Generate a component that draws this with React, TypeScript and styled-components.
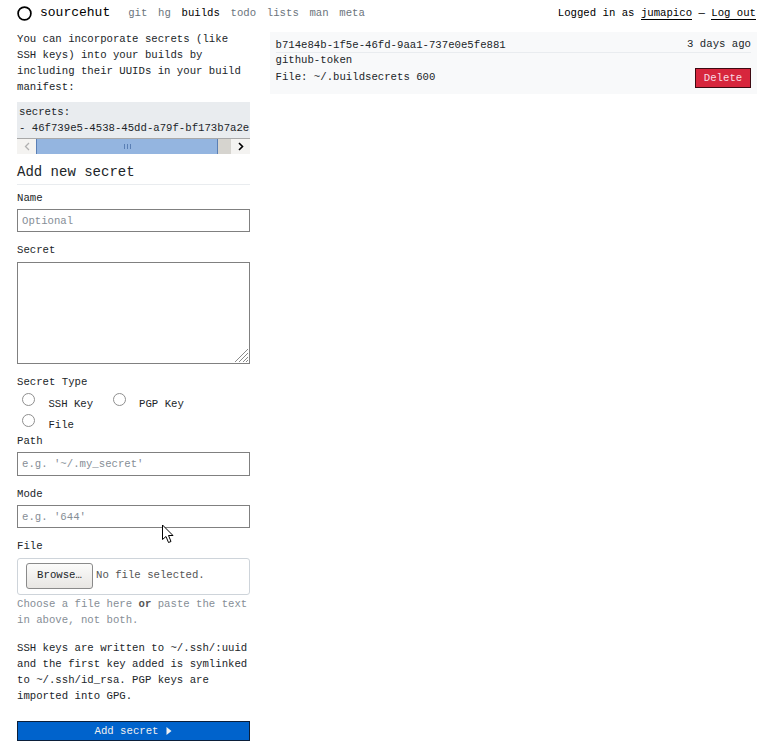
import React from "react";
import styled, { createGlobalStyle } from "styled-components";

const GlobalStyle = createGlobalStyle`
  html, body {
    margin: 0;
    padding: 0;
    background: #fff;
    overflow: hidden;
  }
  body {
    font-family: "Liberation Mono", monospace;
    font-size: 10.67px;
    line-height: 16px;
    color: #212529;
  }
  * {
    box-sizing: border-box;
  }
`;

const Page = styled.div`
  position: relative;
  width: 769px;
  height: 744px;
  overflow: hidden;
`;

const Nav = styled.nav`
  display: flex;
  align-items: center;
  height: 26px;
  padding: 0 13px 0 17px;
  color: #000;
`;

const Logo = styled.a`
  display: flex;
  align-items: center;
  gap: 8px;
  font-size: 13px;
  color: #000;
  margin-right: 18px;
`;

const NavLink = styled.a<{ $active?: boolean }>`
  margin-right: 10.67px;
  color: ${(p) => (p.$active ? "#000" : "#6c757d")};
`;

const Login = styled.div`
  margin-left: auto;
  white-space: pre;
  a {
    color: #000;
    border-bottom: 1px solid #000;
    text-decoration: none;
  }
`;

const Columns = styled.div`
  display: grid;
  grid-template-columns: 233px 487px;
  column-gap: 20px;
  padding: 0 12px 0 17px;
  margin-top: 6px;
`;

const Sidebar = styled.div`
  display: flex;
  flex-direction: column;
  margin-top: -1px;
`;

const Paragraph = styled.p`
  margin: 0 0 7px;
`;

const CodeBlock = styled.div`
  background: #e9ecef;
  border-bottom: 1px solid #a8a8a8;
  height: 37px;
  padding: 2px 2px 0;
  overflow: hidden;
  white-space: pre;
`;

const Scrollbar = styled.div`
  display: flex;
  height: 15px;
  background: #d6d4cf;
`;

const ScrollEnd = styled.div<{ $dim?: boolean }>`
  display: flex;
  align-items: center;
  justify-content: center;
  width: 19px;
  background: #f4f3f1;
  color: ${(p) => (p.$dim ? "#b0b0b0" : "#000")};
`;

const ScrollThumb = styled.div`
  display: flex;
  align-items: center;
  justify-content: center;
  width: 182px;
  background: #94b5e0;
  border-left: 1px solid #5a7fb5;
  border-right: 1px solid #5a7fb5;
  color: #5a7fb5;
`;

const ScrollTrack = styled.div`
  flex: 1;
`;

const Heading = styled.h3`
  margin: 9px 0 0;
  padding-bottom: 2px;
  font-size: 14px;
  line-height: 19px;
  font-weight: 400;
  border-bottom: 1px solid #e9ecef;
`;

const Label = styled.label`
  display: block;
  margin-bottom: 3px;
  line-height: 16px;
`;

const Field = styled.div<{ $gap?: number }>`
  margin-bottom: ${(p) => p.$gap ?? 10}px;
`;

const Fields = styled.div`
  margin-top: 5px;
`;

const TextInput = styled.input<{ $tall?: boolean }>`
  display: block;
  width: 100%;
  height: ${(p) => (p.$tall ? 24 : 23)}px;
  padding: 0 4px;
  border: 1px solid #808080;
  border-radius: 0;
  outline: none;
  font: inherit;
  color: #212529;
  &::placeholder {
    color: #868e96;
    opacity: 1;
  }
`;

const TextBox = styled.div`
  position: relative;
  height: 102px;
  margin-top: 4px;
  border: 1px solid #808080;
`;

const Grip = styled.svg`
  position: absolute;
  right: 0;
  bottom: 0;
`;

const RadioGroup = styled.div`
  display: flex;
  flex-wrap: wrap;
  row-gap: 3px;
`;

const RadioItem = styled.label`
  display: flex;
  align-items: flex-start;
  padding-left: 5px;
  height: 18px;
  margin-right: 14.5px;
`;

const RadioText = styled.span`
  margin-left: 13.4px;
  margin-top: 3px;
`;

const RadioRing = styled.span`
  display: block;
  width: 13px;
  height: 13px;
  border: 1px solid #8f8f8f;
  border-radius: 50%;
  background: #fff;
`;

const FileBox = styled.div`
  display: flex;
  align-items: center;
  height: 37px;
  margin-top: 4px;
  padding: 0 8px 2px;
  border: 1px solid #ced4da;
  border-radius: 3px;
  color: #555;
`;

const BrowseButton = styled.span`
  display: flex;
  align-items: center;
  justify-content: center;
  width: 67px;
  height: 26px;
  margin-right: 3px;
  padding-bottom: 1px;
  border: 1px solid #8a8a8a;
  border-radius: 3px;
  background: linear-gradient(#fbfbfa, #e8e6e3);
  color: #212529;
`;

const FileName = styled.span`
  margin-top: -1px;
`;

const Help = styled.p`
  margin: 1px 0 0;
  color: #868e96;
  b {
    color: #555;
  }
`;

const Note = styled.p`
  margin: 2px 0 0;
`;

const SubmitButton = styled.button`
  display: flex;
  align-items: center;
  justify-content: center;
  gap: 8px;
  width: 100%;
  height: 20px;
  margin-top: 17px;
  padding: 0;
  border: 1px solid #0b1f3a;
  border-radius: 0;
  background: #0063cc;
  color: #f0f0f0;
  font: inherit;
`;

const Card = styled.div`
  align-self: start;
  height: 62px;
  padding: 5px 6px 0 5.5px;
  background: #f8f9fa;
`;

const CardHead = styled.div`
  display: flex;
  justify-content: space-between;
  height: 16px;
  border-bottom: 1px solid #e9ecef;
`;

const CardAge = styled.span`
  margin-top: -1px;
`;

const CardName = styled.div`
  margin-top: -1px;
`;

const CardFoot = styled.div`
  display: flex;
  justify-content: space-between;
  align-items: flex-start;
`;

const FileLine = styled.div`
  margin-top: 1px;
`;

const DeleteButton = styled.button`
  width: 56px;
  height: 20px;
  padding: 0;
  border: 1px solid #3d0a12;
  border-radius: 0;
  background: #d7263d;
  color: #f8dce4;
  font: inherit;
`;

const Pointer = styled.svg`
  position: absolute;
  left: 161px;
  top: 524px;
`;

const App: React.FC = () => {
  return (
    <Page>
      <GlobalStyle />
      <Nav>
        <Logo>
          <svg width="15" height="15" viewBox="0 0 15 15">
            <circle cx="7.5" cy="7.5" r="6.4" fill="none" stroke="#000" strokeWidth="1.7" />
          </svg>
          sourcehut
        </Logo>
        <NavLink>git</NavLink>
        <NavLink>hg</NavLink>
        <NavLink $active>builds</NavLink>
        <NavLink>todo</NavLink>
        <NavLink>lists</NavLink>
        <NavLink>man</NavLink>
        <NavLink>meta</NavLink>
        <Login>
          Logged in as <a>jumapico</a> — <a>Log out</a>
        </Login>
      </Nav>
      <Columns>
        <Sidebar>
          <Paragraph>
            You can incorporate secrets (like SSH keys) into your builds by including their UUIDs in
            your build manifest:
          </Paragraph>
          <CodeBlock>
            {"secrets:\n- 46f739e5-4538-45dd-a79f-bf173b7a2e"}
          </CodeBlock>
          <Scrollbar>
            <ScrollEnd $dim>
              <svg width="6" height="9" viewBox="0 0 6 9">
                <path d="M5 1L1.5 4.5L5 8" fill="none" stroke="currentColor" strokeWidth="1.3" />
              </svg>
            </ScrollEnd>
            <ScrollThumb>
              <svg width="7" height="5" viewBox="0 0 7 5">
                <path d="M.5 0V5M3.5 0V5M6.5 0V5" stroke="currentColor" />
              </svg>
            </ScrollThumb>
            <ScrollTrack />
            <ScrollEnd>
              <svg width="6" height="9" viewBox="0 0 6 9">
                <path d="M1 1L4.5 4.5L1 8" fill="none" stroke="currentColor" strokeWidth="1.6" />
              </svg>
            </ScrollEnd>
          </Scrollbar>
          <Heading>Add new secret</Heading>
          <Fields>
            <Field>
              <Label>Name</Label>
              <TextInput placeholder="Optional" />
            </Field>
            <Field>
              <Label>Secret</Label>
              <TextBox>
                <Grip width="15" height="15" viewBox="0 0 15 15">
                  <path d="M1 14L14 1M5 14L14 5M9 14L14 9M12 14L14 12" stroke="#8a8a8a" fill="none" />
                </Grip>
              </TextBox>
            </Field>
            <Field $gap={1}>
              <Label>Secret Type</Label>
              <RadioGroup>
                <RadioItem>
                  <RadioRing />
                  <RadioText>SSH Key</RadioText>
                </RadioItem>
                <RadioItem>
                  <RadioRing />
                  <RadioText>PGP Key</RadioText>
                </RadioItem>
                <RadioItem>
                  <RadioRing />
                  <RadioText>File</RadioText>
                </RadioItem>
              </RadioGroup>
            </Field>
            <Field>
              <Label>Path</Label>
              <TextInput $tall placeholder="e.g. '~/.my_secret'" />
            </Field>
            <Field>
              <Label>Mode</Label>
              <TextInput placeholder="e.g. '644'" />
            </Field>
            <Field>
              <Label>File</Label>
              <FileBox>
                <BrowseButton>Browse…</BrowseButton>
                <FileName>No file selected.</FileName>
              </FileBox>
              <Help>
                Choose a file here <b>or</b> paste the text in above, not both.
              </Help>
            </Field>
          </Fields>
          <Note>
            SSH keys are written to ~/.ssh/:uuid and the first key added is symlinked to
            ~/.ssh/id_rsa. PGP keys are imported into GPG.
          </Note>
          <SubmitButton>
            Add secret
            <svg width="6" height="8" viewBox="0 0 6 8">
              <path d="M0.5 0L5.5 4L0.5 8Z" fill="currentColor" />
            </svg>
          </SubmitButton>
        </Sidebar>
        <Card>
          <CardHead>
            <span>b714e84b-1f5e-46fd-9aa1-737e0e5fe881</span>
            <CardAge>3 days ago</CardAge>
          </CardHead>
          <CardName>github-token</CardName>
          <CardFoot>
            <FileLine>File: ~/.buildsecrets 600</FileLine>
            <DeleteButton>Delete</DeleteButton>
          </CardFoot>
        </Card>
      </Columns>
      <Pointer width="14" height="20" viewBox="0 0 14 20">
        <path d="M1.5 1V15.5L5 12.5L7.5 18.5L10 17.5L7.5 11.5H12Z" fill="#fff" stroke="#000" />
      </Pointer>
    </Page>
  );
};

export default App;
